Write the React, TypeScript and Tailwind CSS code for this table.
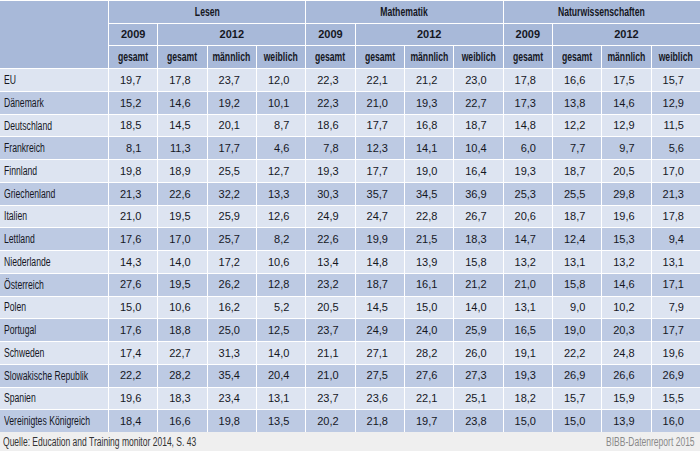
import React from "react";

const rows: [string, string[]][] = [
  ["EU", ["19,7","17,8","23,7","12,0","22,3","22,1","21,2","23,0","17,8","16,6","17,5","15,7"]],
  ["Dänemark", ["15,2","14,6","19,2","10,1","22,3","21,0","19,3","22,7","17,3","13,8","14,6","12,9"]],
  ["Deutschland", ["18,5","14,5","20,1","8,7","18,6","17,7","16,8","18,7","14,8","12,2","12,9","11,5"]],
  ["Frankreich", ["8,1","11,3","17,7","4,6","7,8","12,3","14,1","10,4","6,0","7,7","9,7","5,6"]],
  ["Finnland", ["19,8","18,9","25,5","12,7","19,3","17,7","19,0","16,4","19,3","18,7","20,5","17,0"]],
  ["Griechenland", ["21,3","22,6","32,2","13,3","30,3","35,7","34,5","36,9","25,3","25,5","29,8","21,3"]],
  ["Italien", ["21,0","19,5","25,9","12,6","24,9","24,7","22,8","26,7","20,6","18,7","19,6","17,8"]],
  ["Lettland", ["17,6","17,0","25,7","8,2","22,6","19,9","21,5","18,3","14,7","12,4","15,3","9,4"]],
  ["Niederlande", ["14,3","14,0","17,2","10,6","13,4","14,8","13,9","15,8","13,2","13,1","13,2","13,1"]],
  ["Österreich", ["27,6","19,5","26,2","12,8","23,2","18,7","16,1","21,2","21,0","15,8","14,6","17,1"]],
  ["Polen", ["15,0","10,6","16,2","5,2","20,5","14,5","15,0","14,0","13,1","9,0","10,2","7,9"]],
  ["Portugal", ["17,6","18,8","25,0","12,5","23,7","24,9","24,0","25,9","16,5","19,0","20,3","17,7"]],
  ["Schweden", ["17,4","22,7","31,3","14,0","21,1","27,1","28,2","26,0","19,1","22,2","24,8","19,6"]],
  ["Slowakische Republik", ["22,2","28,2","35,4","20,4","21,0","27,5","27,6","27,3","19,3","26,9","26,6","26,9"]],
  ["Spanien", ["19,6","18,3","23,4","13,1","23,7","23,6","22,1","25,1","18,2","15,7","15,9","15,5"]],
  ["Vereinigtes Königreich", ["18,4","16,6","19,8","13,5","20,2","21,8","19,7","23,8","15,0","15,0","13,9","16,0"]],
];

const font = { fontFamily: '"Liberation Sans", Arial, sans-serif' };

function H({ children, span = "" }: { children: React.ReactNode; span?: string }) {
  return (
    <div className={`bg-[#a8b9d9] font-bold flex items-center justify-center ${span}`}>
      <span className="whitespace-nowrap text-[12px] scale-x-[0.72] origin-center">{children}</span>
    </div>
  );
}

function Y({ children, span = "" }: { children: React.ReactNode; span?: string }) {
  return (
    <div className={`bg-[#a8b9d9] font-bold flex items-center justify-center ${span}`}>
      <span className="whitespace-nowrap">{children}</span>
    </div>
  );
}

export default function App() {
  const groups = ["Lesen", "Mathematik", "Naturwissenschaften"];
  return (
    <div className="w-[700px] h-[455px] bg-white text-[11px] text-[#15171f]" style={font}>
      <div className="pt-[1px]">
        <div className="grid grid-cols-[108px_repeat(12,minmax(0,1fr))] grid-rows-[repeat(19,minmax(0,1fr))] gap-px h-[431px] bg-white">
          <div className="bg-[#a8b9d9] row-span-3" />
          {groups.map((g) => (
            <H key={g} span="col-span-4">{g}</H>
          ))}
          {groups.map((g) => (
            <React.Fragment key={g + "y"}>
              <Y>2009</Y>
              <Y span="col-span-3">2012</Y>
            </React.Fragment>
          ))}
          {groups.map((g) => (
            <React.Fragment key={g + "s"}>
              <H>gesamt</H>
              <H>gesamt</H>
              <H>männlich</H>
              <H>weiblich</H>
            </React.Fragment>
          ))}
          {rows.map(([name, vals], i) => {
            const bg = i % 2 === 0 ? "bg-[#dde4f1]" : "bg-[#bdcae3]";
            return (
              <React.Fragment key={name}>
                <div className={`${bg} flex items-center pl-[4px]`}>
                  <span className="whitespace-nowrap text-[12px] scale-x-[0.72] origin-left">{name}</span>
                </div>
                {vals.map((v, j) => (
                  <div key={j} className={`${bg} flex items-center justify-end pr-[16px]`}>{v}</div>
                ))}
              </React.Fragment>
            );
          })}
        </div>
      </div>
      <div className="bg-[#efefef] h-[19px] flex items-center justify-between px-[3px] text-[12px]">
        <span className="text-[#333] whitespace-nowrap scale-x-[0.71] origin-left">Quelle: Education and Training monitor 2014, S. 43</span>
        <span className="text-[#8a8a8a] whitespace-nowrap scale-x-[0.71] origin-right pr-[3px]">BIBB-Datenreport 2015</span>
      </div>
    </div>
  );
}
